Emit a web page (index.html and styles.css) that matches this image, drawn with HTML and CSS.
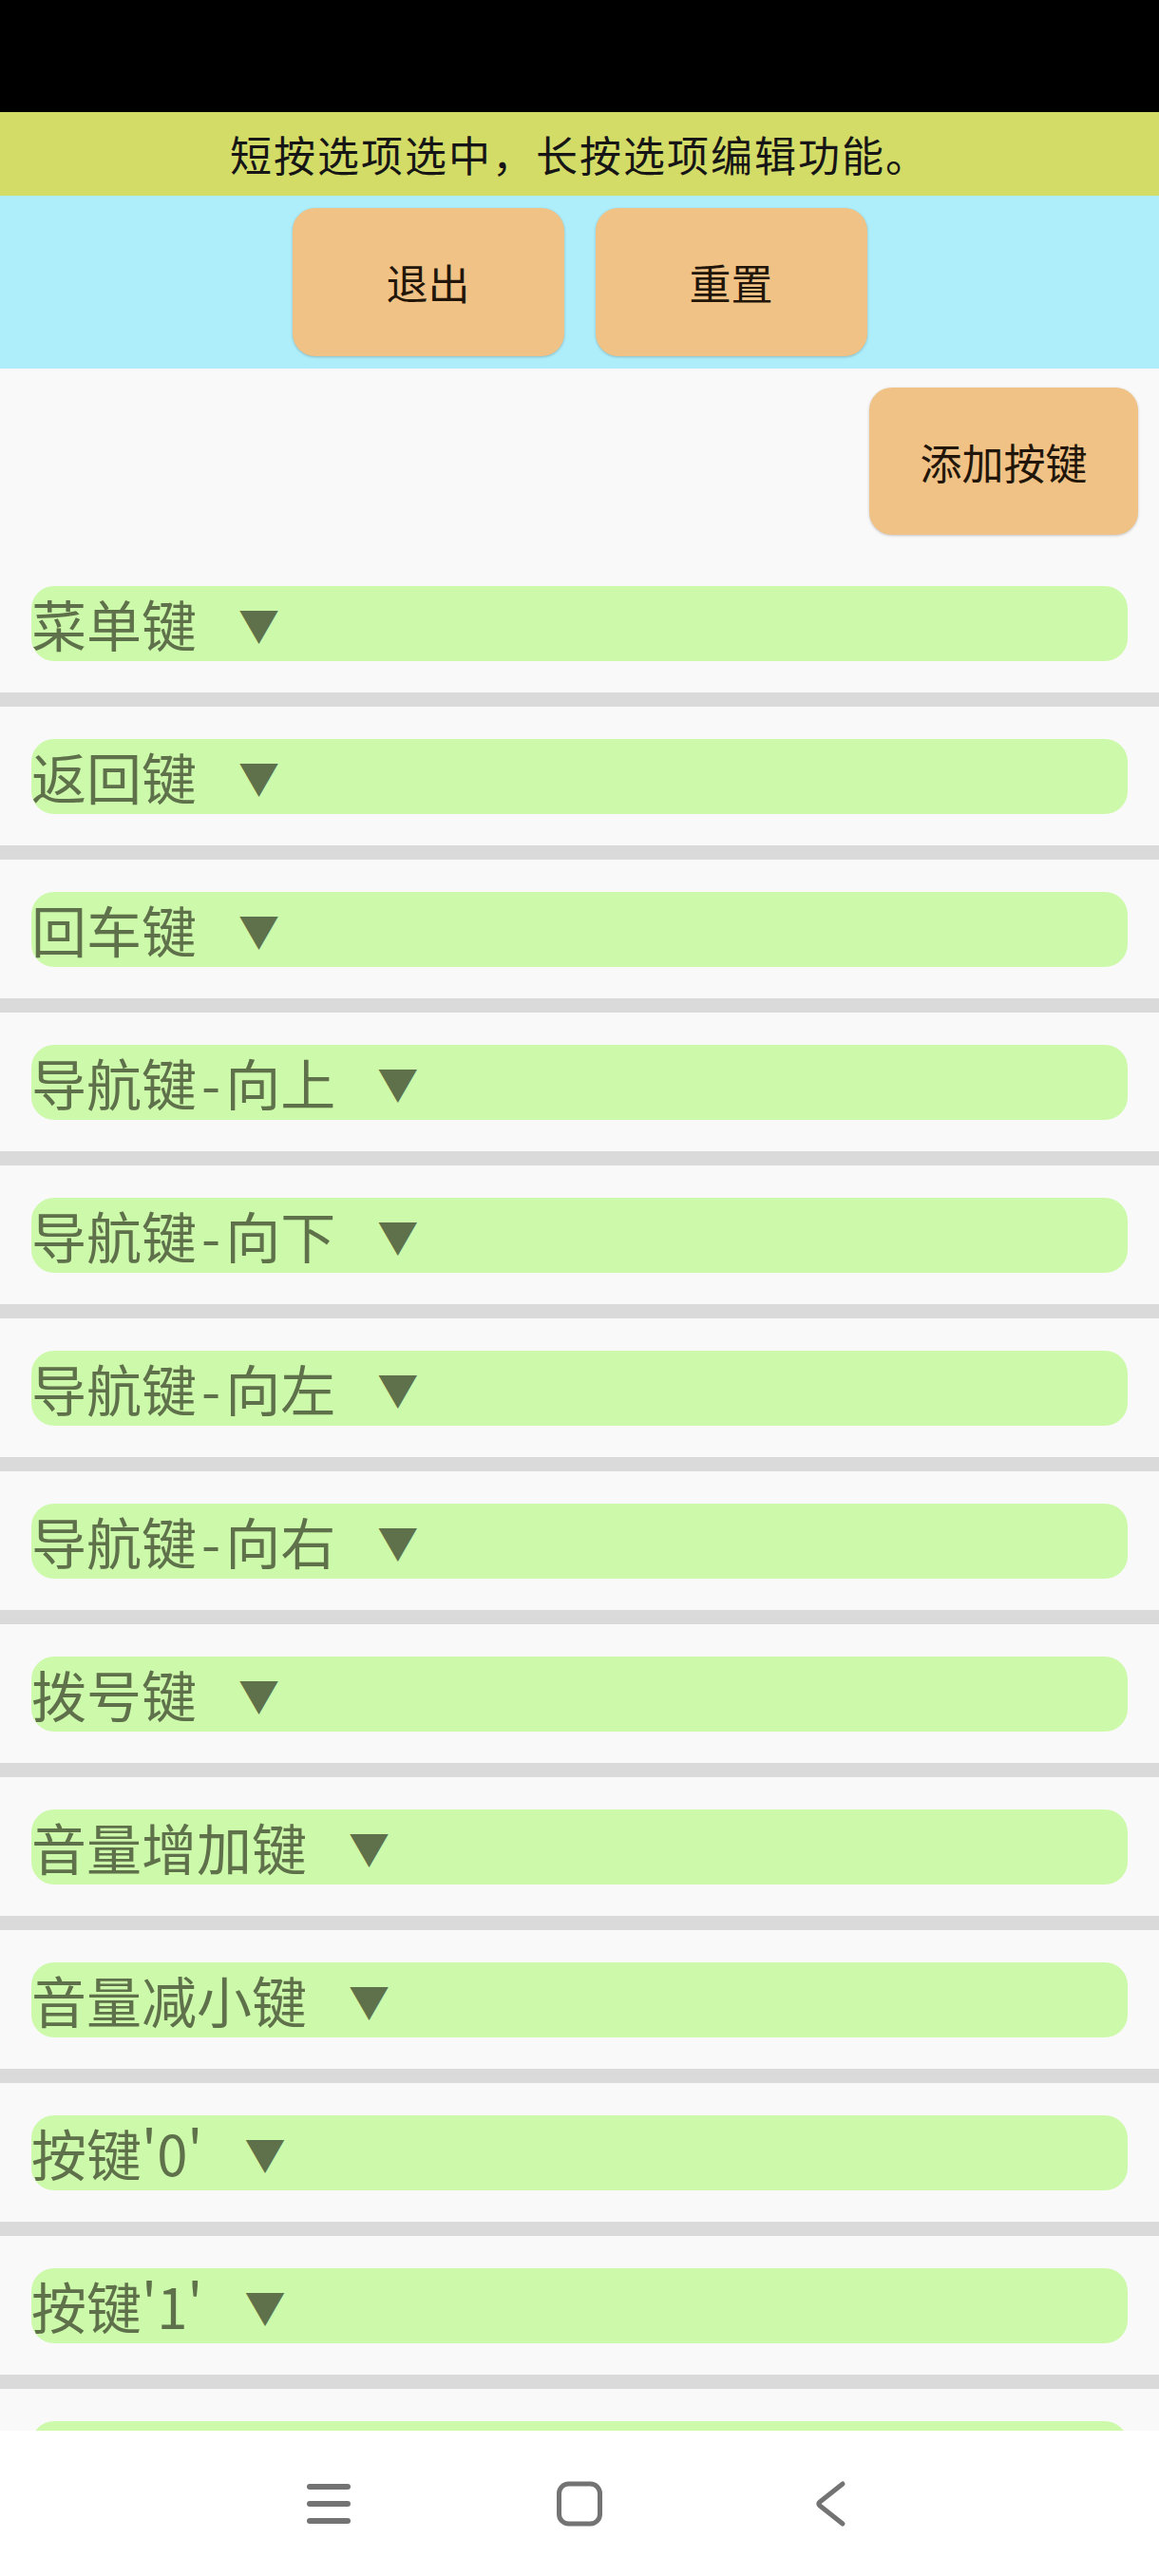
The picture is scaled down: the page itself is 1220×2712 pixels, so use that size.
FILE: index.html
```html
<!DOCTYPE html>
<html lang="zh-CN">
<head>
<meta charset="utf-8">
<title>按键设置</title>
<link rel="stylesheet" href="styles.css">
</head>
<body>
<div class="screen">
  <div class="status-bar"></div>
  <div class="hint-bar">短按选项选中，长按选项编辑功能。</div>
  <div class="toolbar">
    <button class="btn btn-top">退出</button>
    <button class="btn btn-top">重置</button>
  </div>
  <div class="content">
    <div class="add-row">
      <button class="btn btn-add">添加按键</button>
    </div>
    <div class="row"><div class="pill"><span class="label">菜单键</span><span class="arrow">▼</span></div></div>
    <div class="row"><div class="pill"><span class="label">返回键</span><span class="arrow">▼</span></div></div>
    <div class="row"><div class="pill"><span class="label">回车键</span><span class="arrow">▼</span></div></div>
    <div class="row"><div class="pill"><span class="label">导航键<span class="dash">-</span>向上</span><span class="arrow">▼</span></div></div>
    <div class="row"><div class="pill"><span class="label">导航键<span class="dash">-</span>向下</span><span class="arrow">▼</span></div></div>
    <div class="row"><div class="pill"><span class="label">导航键<span class="dash">-</span>向左</span><span class="arrow">▼</span></div></div>
    <div class="row"><div class="pill"><span class="label">导航键<span class="dash">-</span>向右</span><span class="arrow">▼</span></div></div>
    <div class="row"><div class="pill"><span class="label">拨号键</span><span class="arrow">▼</span></div></div>
    <div class="row"><div class="pill"><span class="label">音量增加键</span><span class="arrow">▼</span></div></div>
    <div class="row"><div class="pill"><span class="label">音量减小键</span><span class="arrow">▼</span></div></div>
    <div class="row"><div class="pill"><span class="label">按键'0'</span><span class="arrow">▼</span></div></div>
    <div class="row"><div class="pill"><span class="label">按键'1'</span><span class="arrow">▼</span></div></div>
    <div class="row"><div class="pill"></div></div>
  </div>
  <div class="nav-bar">
    <div class="nav-item">
      <svg width="48" height="44" viewBox="0 0 48 44"><g stroke="#737373" stroke-width="6" stroke-linecap="round"><line x1="4" y1="4" x2="44" y2="4"/><line x1="4" y1="22" x2="44" y2="22"/><line x1="4" y1="40" x2="44" y2="40"/></g></svg>
    </div>
    <div class="nav-item">
      <svg width="50" height="48" viewBox="0 0 50 48"><rect x="3.5" y="3" width="43" height="42" rx="10" ry="10" fill="none" stroke="#737373" stroke-width="5"/></svg>
    </div>
    <div class="nav-item">
      <svg width="34" height="50" viewBox="0 0 34 50"><path d="M30 4 L6 23 Q3.5 25 6 27 L30 46" fill="none" stroke="#737373" stroke-width="5" stroke-linecap="round" stroke-linejoin="round"/></svg>
    </div>
  </div>
</div>
</body>
</html>
```

FILE: styles.css
```css
* {
  box-sizing: border-box;
}

html, body {
  margin: 0;
  padding: 0;
}

body {
  font-family: "Noto Sans CJK SC", "Noto Sans", sans-serif;
  background: #000;
}

.screen {
  width: 1220px;
  height: 2712px;
  display: flex;
  flex-direction: column;
  overflow: hidden;
  background: #f9f9f9;
}

.status-bar {
  height: 118px;
  flex: none;
  background: #000;
}

.hint-bar {
  height: 88px;
  flex: none;
  background: #d4dc68;
  color: #161616;
  font-size: 44px;
  letter-spacing: 2px;
  line-height: 88px;
  text-align: center;
  white-space: nowrap;
}

.toolbar {
  height: 182px;
  flex: none;
  background: #aeeefa;
  display: flex;
  justify-content: center;
  align-items: center;
  gap: 33px;
}

.btn {
  border: none;
  margin: 0;
  padding: 0;
  background: #f1c285;
  color: #22160a;
  font-family: "Noto Sans CJK SC", "Noto Sans", sans-serif;
  font-size: 44px;
  border-radius: 24px;
  box-shadow: 0 1px 3px rgba(0, 0, 0, 0.22);
}

.btn-top {
  width: 286px;
  height: 156px;
}

.content {
  flex: 1;
  min-height: 0;
  overflow: hidden;
}

.add-row {
  display: flex;
  justify-content: flex-end;
  padding: 20px 22px 20px 0;
}

.btn-add {
  width: 283px;
  height: 155px;
}

.row {
  padding: 34px 33px 33px;
  border-bottom: 15px solid #dadada;
}

.pill {
  height: 79px;
  background: #cdf9ab;
  border-radius: 24px;
  display: flex;
  align-items: center;
  color: #5e714a;
  font-size: 58px;
  line-height: 79px;
  white-space: nowrap;
}

.label {
  display: block;
}

.dash {
  margin: 0 5px;
}

.arrow {
  display: block;
  font-size: 43px;
  margin-left: 44px;
}

.nav-bar {
  height: 153px;
  flex: none;
  background: #ffffff;
  display: flex;
  justify-content: center;
  align-items: center;
  gap: 174px;
}

.nav-item {
  width: 90px;
  height: 60px;
  display: flex;
  align-items: center;
  justify-content: center;
}

.nav-item svg {
  display: block;
}
```
